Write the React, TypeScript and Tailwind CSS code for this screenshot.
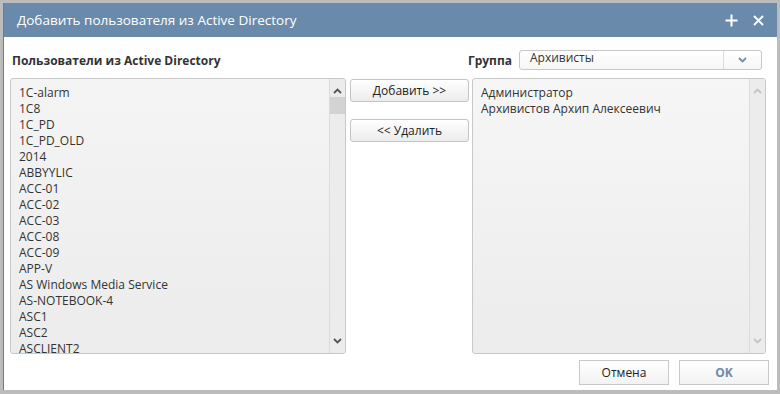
const users = [
  '1C-alarm',
  '1C8',
  '1C_PD',
  '1C_PD_OLD',
  '2014',
  'ABBYYLIC',
  'ACC-01',
  'ACC-02',
  'ACC-03',
  'ACC-08',
  'ACC-09',
  'APP-V',
  'AS Windows Media Service',
  'AS-NOTEBOOK-4',
  'ASC1',
  'ASC2',
  'ASCLIENT2',
];

const members = ['Администратор', 'Архивистов Архип Алексеевич'];

function Chevron({ up, className }: { up?: boolean; className?: string }) {
  return (
    <svg width="9" height="6" viewBox="0 0 9 6" className={className}>
      <path
        d={up ? 'M1 5 L4.5 1.5 L8 5' : 'M1 1 L4.5 4.5 L8 1'}
        fill="none"
        stroke="currentColor"
        strokeWidth="1.8"
      />
    </svg>
  );
}

function ScrollBar({ thumb, faded }: { thumb?: boolean; faded?: boolean }) {
  return (
    <div className="flex w-[16px] shrink-0 flex-col border-l border-[#dcdcdc] bg-[#ececec]">
      <div className={`flex h-[18px] items-end justify-center ${faded ? 'text-[#c4c4c4]' : 'text-[#555]'}`}>
        <Chevron up className="mb-[3px]" />
      </div>
      {thumb && <div className="h-[17px] bg-[#d3d3d3]" />}
      <div className="flex-1" />
      <div className={`flex h-[18px] items-start justify-center ${faded ? 'text-[#c4c4c4]' : 'text-[#555]'}`}>
        <Chevron className="mt-[3px]" />
      </div>
    </div>
  );
}

function Btn({ children }: { children: React.ReactNode }) {
  return (
    <button
      type="button"
      className="h-[23px] w-[119px] rounded-[3px] border border-[#c4c4c4] bg-gradient-to-b from-[#ffffff] to-[#ececec] text-[12px] text-[#222]"
    >
      {children}
    </button>
  );
}

export default function App() {
  return (
    <div
      className="h-[394px] w-[780px] bg-[#bcbcbc] pl-[3px] pr-[3px] pt-[3px] pb-[4px]"
      style={{ fontFamily: '"Open Sans", "Liberation Sans", sans-serif' }}
    >
      <div className="flex h-full flex-col border-l border-[#7a7a7a] bg-white">
        <div className="flex h-[34px] shrink-0 items-center bg-[#6a8aab] pl-[13px] pr-[13px] text-white">
          <span className="text-[13.5px]">Добавить пользователя из Active Directory</span>
          <div className="ml-auto flex items-center gap-[15px]">
            <svg width="13" height="13" viewBox="0 0 13 13">
              <path d="M6.5 0.5 V12.5 M0.5 6.5 H12.5" stroke="white" strokeWidth="2" />
            </svg>
            <svg width="11" height="11" viewBox="0 0 11 11">
              <path d="M1 1 L10 10 M10 1 L1 10" stroke="white" strokeWidth="1.8" />
            </svg>
          </div>
        </div>

        <div className="flex flex-1 flex-col pl-[6px] pr-[8px] pt-[13px]">
          <div className="flex gap-[4px]">
            <div className="flex w-[336px] flex-col">
              <div className="flex h-[19px] items-center pl-[2px] pt-[2px] text-[12px] font-bold text-[#333]">
                Пользователи из Active Directory
              </div>
              <div className="mt-[9px] flex h-[276px] overflow-hidden rounded-[3px] border border-[#c8c8c8] bg-gradient-to-b from-[#f4f4f4] to-[#ececec]">
                <div className="flex-1 overflow-hidden pl-[8px] pt-[6px] text-[12px] leading-[16px] text-[#333]">
                  {users.map((u) => (
                    <div key={u}>{u}</div>
                  ))}
                </div>
                <ScrollBar thumb />
              </div>
            </div>

            <div className="mt-[29px] flex w-[119px] flex-col gap-[17px]">
              <Btn>Добавить &gt;&gt;</Btn>
              <Btn>&lt;&lt; Удалить</Btn>
            </div>

            <div className="ml-[-1px] flex w-[294px] flex-col">
              <div className="flex h-[19px] items-center justify-end gap-[7px] pr-[4px]">
                <span className="shrink-0 pt-[3px] text-[12px] font-bold text-[#333]">Группа</span>
                <div className="flex h-[20px] w-[243px] shrink-0 items-center rounded-[3px] border border-[#c8c8c8] bg-gradient-to-b from-white to-[#f6f6f6]">
                  <span className="flex-1 pl-[10px] text-[12px] leading-[12px] text-[#333] -mt-[4px]">
                    Архивисты
                  </span>
                  <div className="flex h-full w-[38px] items-center justify-center border-l border-[#dcdcdc] text-[#7a8ca8]">
                    <Chevron />
                  </div>
                </div>
              </div>
              <div className="mt-[9px] flex h-[276px] overflow-hidden rounded-[3px] border border-[#c8c8c8] bg-gradient-to-b from-[#f6f6f6] to-[#ececec]">
                <div className="flex-1 pl-[8px] pt-[6px] text-[12px] leading-[16px] text-[#333]">
                  {members.map((m) => (
                    <div key={m}>{m}</div>
                  ))}
                </div>
                <ScrollBar faded />
              </div>
            </div>
          </div>

          <div className="mt-[6px] flex justify-end gap-[10px]">
            <button
              type="button"
              className="h-[25px] w-[90px] border border-[#c8c8c8] bg-gradient-to-b from-white to-[#f2f2f2] text-[12px] text-[#222]"
            >
              Отмена
            </button>
            <button
              type="button"
              className="h-[25px] w-[90px] border border-[#c8c8c8] bg-gradient-to-b from-white to-[#f2f2f2] text-[12px] font-bold text-[#6f8aa8]"
            >
              OK
            </button>
          </div>
        </div>
      </div>
    </div>
  );
}
